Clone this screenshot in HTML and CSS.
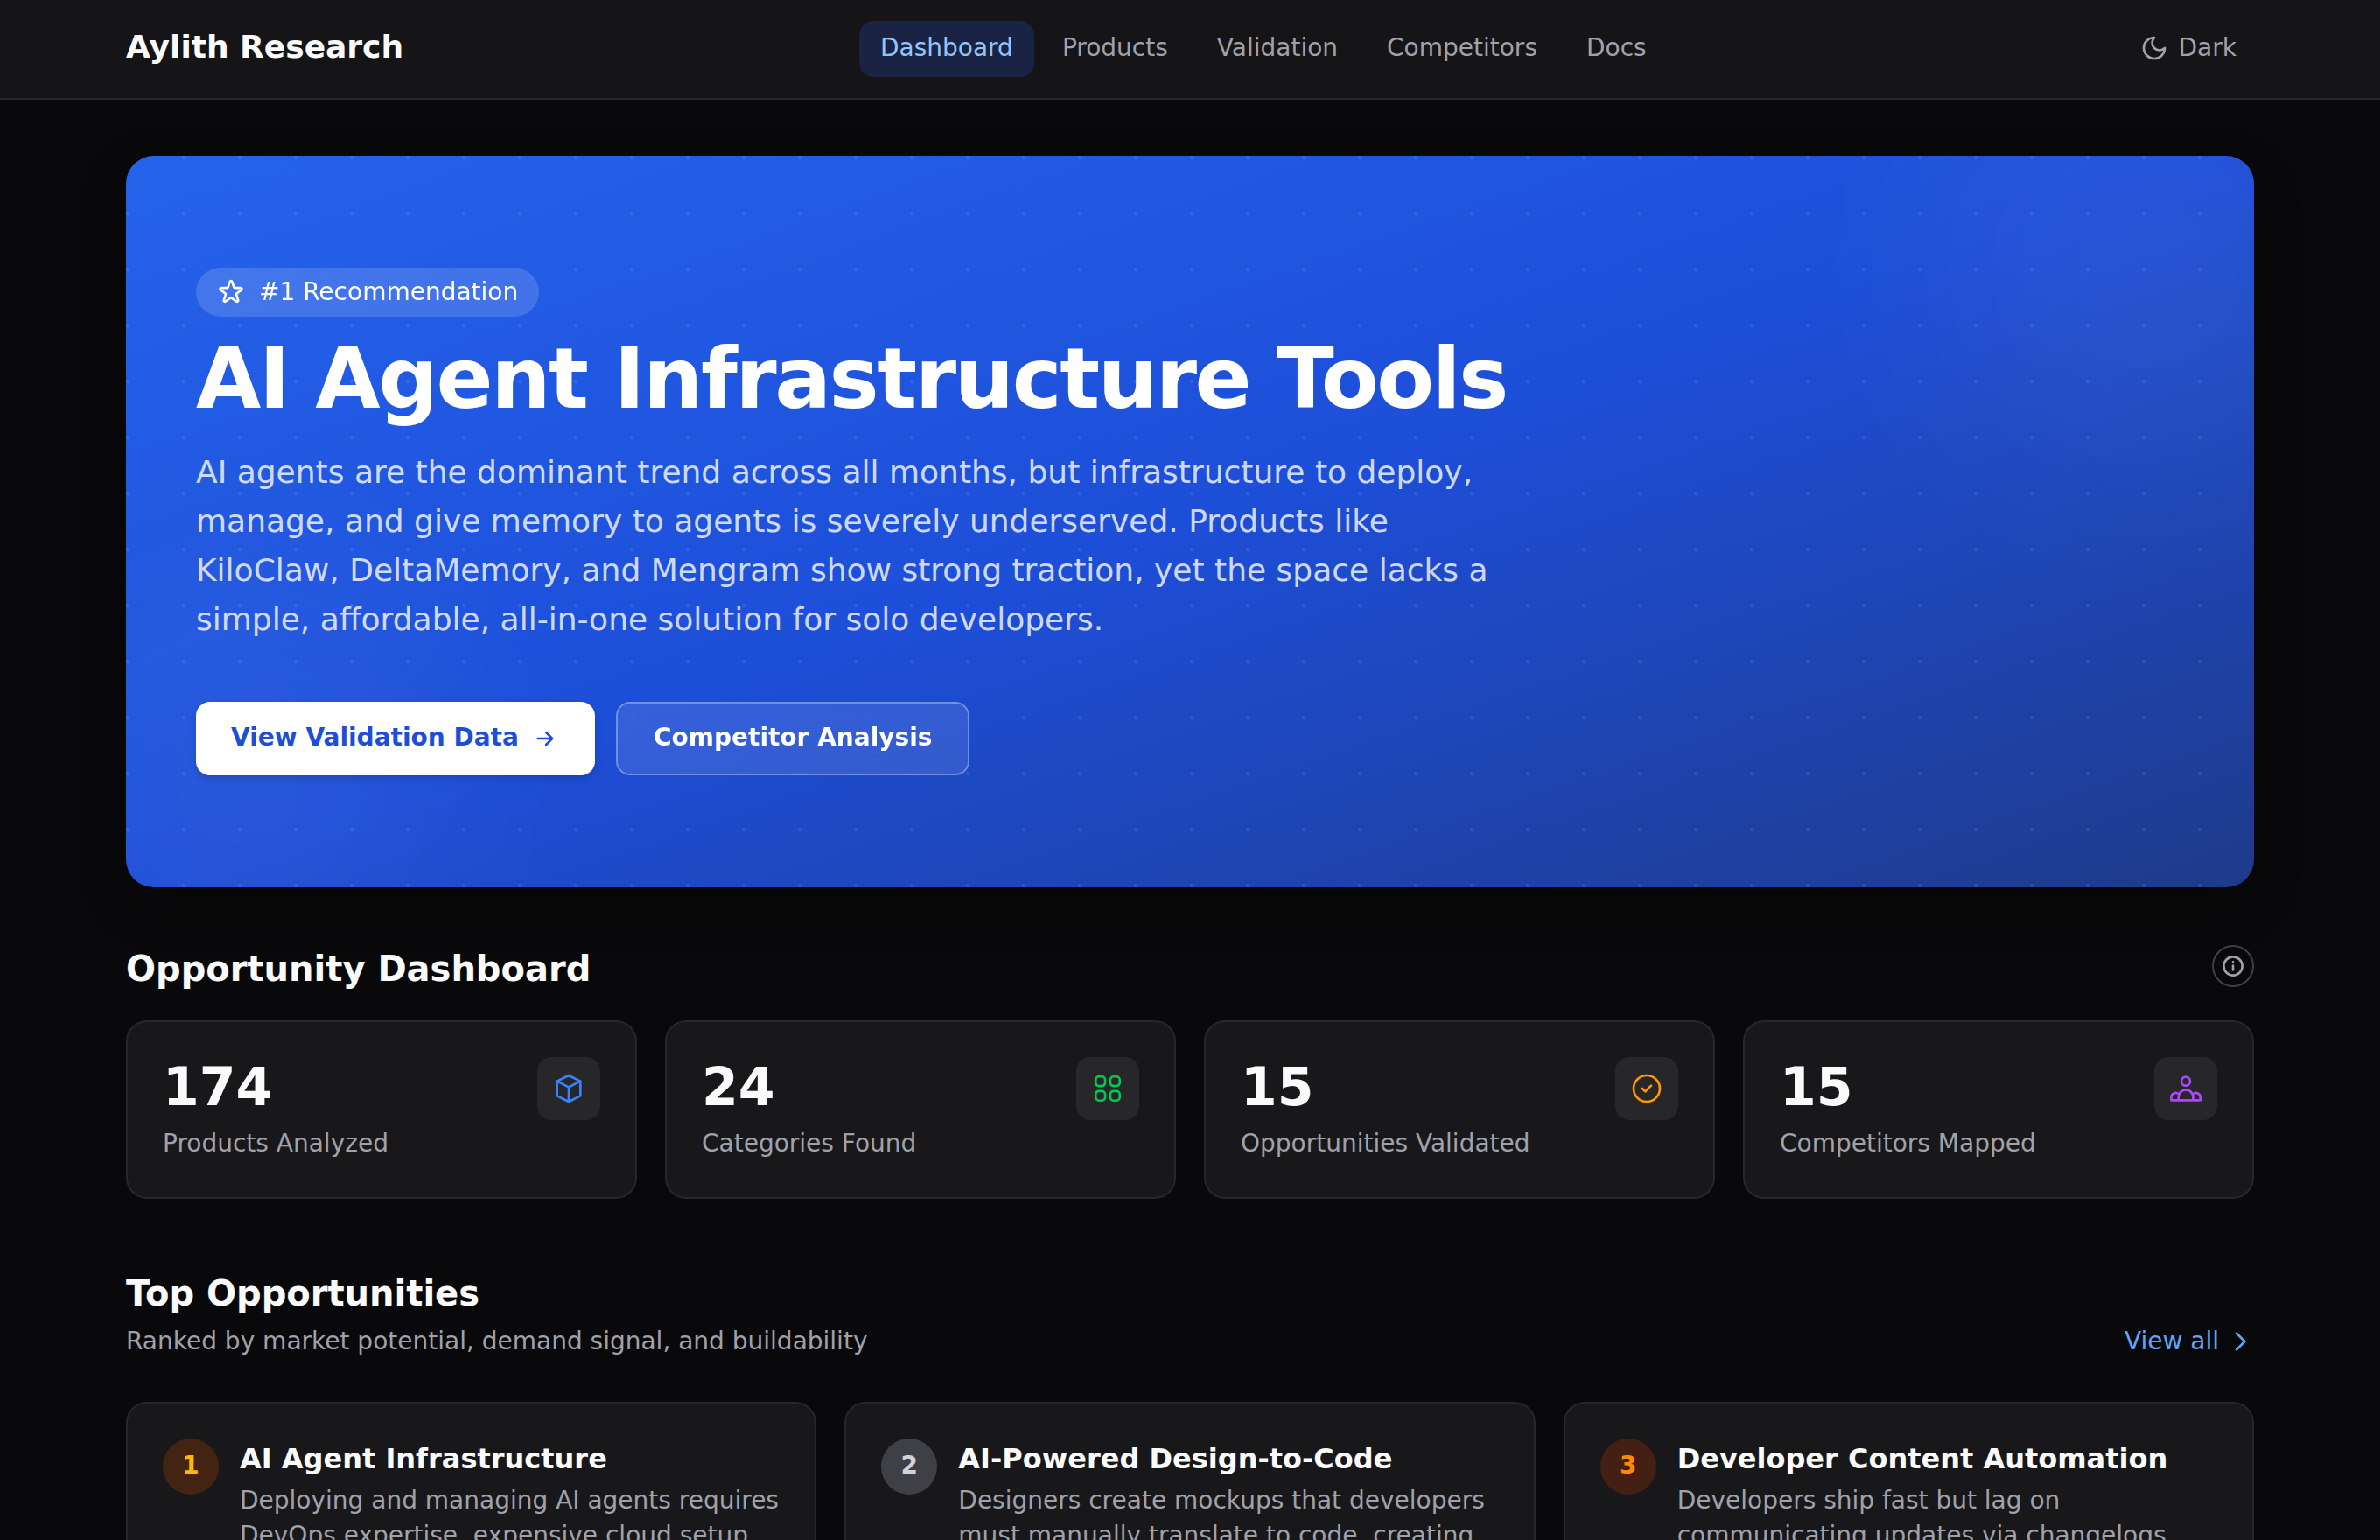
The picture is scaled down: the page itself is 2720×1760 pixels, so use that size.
FILE: index.html
```
<!DOCTYPE html>
<html lang="en">
<head>
  <meta charset="utf-8">
  <title>Aylith Research</title>
  <link rel="stylesheet" href="styles.css">
</head>
<body>

  <header class="header">
    <div class="container header-inner">
      <a class="brand">Aylith Research</a>
      <nav class="nav">
        <a class="nav-link active">Dashboard</a>
        <a class="nav-link">Products</a>
        <a class="nav-link">Validation</a>
        <a class="nav-link">Competitors</a>
        <a class="nav-link">Docs</a>
      </nav>
      <button class="theme-toggle">
        <svg class="icon-moon" viewBox="0 0 24 24"><path d="M12 3a6 6 0 0 0 9 9 9 9 0 1 1-9-9Z"/></svg>
        Dark
      </button>
    </div>
  </header>

  <main class="container main">

    <section class="hero">
      <div class="hero-dots"></div>
      <div class="hero-content">
        <span class="hero-badge">
          <svg class="icon-star" viewBox="0 0 24 24"><path d="M11.05 2.93c.3-.92 1.6-.92 1.9 0l1.52 4.67a1 1 0 0 0 .95.69h4.91c.97 0 1.37 1.24.59 1.81l-3.98 2.89a1 1 0 0 0-.36 1.12l1.52 4.67c.3.92-.76 1.69-1.54 1.12l-3.98-2.89a1 1 0 0 0-1.17 0l-3.98 2.89c-.78.57-1.84-.2-1.54-1.12l1.52-4.67a1 1 0 0 0-.36-1.12L3.08 10.1c-.78-.57-.38-1.81.59-1.81h4.91a1 1 0 0 0 .95-.69l1.52-4.67z"/></svg>
          #1 Recommendation
        </span>
        <h1>AI Agent Infrastructure Tools</h1>
        <p class="hero-text">AI agents are the dominant trend across all months, but infrastructure to deploy, manage, and give memory to agents is severely underserved. Products like KiloClaw, DeltaMemory, and Mengram show strong traction, yet the space lacks a simple, affordable, all-in-one solution for solo developers.</p>
        <div class="hero-actions">
          <a class="btn btn-primary">View Validation Data
            <svg class="icon-arrow" viewBox="0 0 24 24"><path d="M5 12h14M13 6l6 6-6 6"/></svg>
          </a>
          <a class="btn btn-ghost">Competitor Analysis</a>
        </div>
      </div>
    </section>

    <section class="dashboard">
      <div class="section-head">
        <h2>Opportunity Dashboard</h2>
        <button class="info-btn">
          <svg viewBox="0 0 24 24"><circle cx="12" cy="12" r="10.6"/><path d="M12 11.6v4.8M12 7.2v.1"/></svg>
        </button>
      </div>
      <div class="stats">
        <div class="stat-card">
          <div>
            <div class="stat-value">174</div>
            <div class="stat-label">Products Analyzed</div>
          </div>
          <div class="stat-icon blue">
            <svg viewBox="0 0 24 24"><path d="M20 7l-8-4-8 4m16 0l-8 4m8-4v10l-8 4m0-10L4 7m8 4v10M4 7v10l8 4"/></svg>
          </div>
        </div>
        <div class="stat-card">
          <div>
            <div class="stat-value">24</div>
            <div class="stat-label">Categories Found</div>
          </div>
          <div class="stat-icon green">
            <svg viewBox="0 0 24 24"><rect x="3.75" y="3.75" width="6.5" height="6.5" rx="2.25"/><rect x="13.75" y="3.75" width="6.5" height="6.5" rx="2.25"/><rect x="3.75" y="13.75" width="6.5" height="6.5" rx="2.25"/><rect x="13.75" y="13.75" width="6.5" height="6.5" rx="2.25"/></svg>
          </div>
        </div>
        <div class="stat-card">
          <div>
            <div class="stat-value">15</div>
            <div class="stat-label">Opportunities Validated</div>
          </div>
          <div class="stat-icon amber">
            <svg viewBox="0 0 24 24"><path d="M9 12l2 2 4-4m6 2a9 9 0 1 1-18 0 9 9 0 0 1 18 0z"/></svg>
          </div>
        </div>
        <div class="stat-card">
          <div>
            <div class="stat-value">15</div>
            <div class="stat-label">Competitors Mapped</div>
          </div>
          <div class="stat-icon purple">
            <svg viewBox="0 0 24 24"><path d="M17 20h5v-2a3 3 0 0 0-5.356-1.857M17 20H7m10 0v-2c0-.656-.126-1.283-.356-1.857M7 20H2v-2a3 3 0 0 1 5.356-1.857M7 20v-2c0-.656.126-1.283.356-1.857m0 0a5.002 5.002 0 0 1 9.288 0M15 7a3 3 0 1 1-6 0 3 3 0 0 1 6 0z"/></svg>
          </div>
        </div>
      </div>
    </section>

    <section class="opportunities">
      <div class="section-head opp-head">
        <div>
          <h2>Top Opportunities</h2>
          <p class="section-sub">Ranked by market potential, demand signal, and buildability</p>
        </div>
        <a class="view-all">View all
          <svg viewBox="0 0 24 24"><path d="M9 5l7 7-7 7"/></svg>
        </a>
      </div>
      <div class="opp-grid">
        <article class="opp-card">
          <span class="rank gold">1</span>
          <div>
            <h3>AI Agent Infrastructure</h3>
            <p>Deploying and managing AI agents requires DevOps expertise, expensive cloud setup,</p>
          </div>
        </article>
        <article class="opp-card">
          <span class="rank silver">2</span>
          <div>
            <h3>AI-Powered Design-to-Code</h3>
            <p>Designers create mockups that developers must manually translate to code, creating</p>
          </div>
        </article>
        <article class="opp-card">
          <span class="rank bronze">3</span>
          <div>
            <h3>Developer Content Automation</h3>
            <p>Developers ship fast but lag on communicating updates via changelogs,</p>
          </div>
        </article>
      </div>
    </section>

  </main>

</body>
</html>
```
FILE: styles.css
```
* { box-sizing: border-box; margin: 0; padding: 0; }

html, body { height: 1760px; overflow: hidden; }
body {
  font-family: "DejaVu Sans", sans-serif;
  font-size: 28px;
  line-height: 40px;
  background: #09090b;
  color: #fafafa;
}
button { font: inherit; color: inherit; background: none; border: none; }
svg { display: block; flex-shrink: 0; fill: none; stroke: currentColor; stroke-linecap: round; stroke-linejoin: round; }

.container { width: 2560px; margin: 0 auto; padding: 0 64px; }

/* Header */
.header { height: 114px; background: #151518; border-bottom: 2px solid #27272a; }
.header-inner {
  height: 112px;
  display: flex;
  align-items: center;
  justify-content: space-between;
}
.brand { padding-bottom: 4px; font-size: 36px; line-height: 56px; font-weight: bold; }
.nav { display: flex; gap: 8px; padding-left: 1px; }
.nav-link { padding: 11px 24px 13px; border-radius: 16px; color: #a1a1aa; }
.nav-link.active { background: #1a2344; color: #93c5fd; }
.theme-toggle { display: flex; align-items: center; gap: 12px; padding: 0 20px 2px; color: #a1a1aa; }
.icon-moon { width: 32px; height: 32px; stroke-width: 2; }

/* Hero */
.main { padding-top: 64px; }
.hero {
  position: relative;
  height: 836px;
  padding: 128px 80px;
  border-radius: 32px;
  overflow: hidden;
  background: linear-gradient(to bottom right, #2563eb, #1d4ed8 50%, #1e3a8a);
  box-shadow: 0 20px 50px rgba(0, 0, 0, 0.3);
}
.hero::before, .hero::after {
  content: "";
  position: absolute;
  width: 448px;
  height: 448px;
  border-radius: 50%;
  background: rgba(255, 255, 255, 0.055);
  filter: blur(128px);
}
.hero::before { top: -96px; right: -96px; }
.hero::after { bottom: -96px; left: -96px; }
.hero-dots {
  position: absolute;
  inset: 0;
  background: radial-gradient(circle at 2px 2px, #fff 2px, transparent 0);
  background-size: 64px 64px;
  opacity: 0.1;
}
.hero-content { position: relative; z-index: 1; }
.hero-badge {
  display: flex;
  align-items: center;
  gap: 16px;
  width: 392px;
  height: 56px;
  padding: 0 24px;
  border-radius: 28px;
  background: rgba(255, 255, 255, 0.15);
  backdrop-filter: blur(16px);
  color: #fff;
  white-space: nowrap;
}
.icon-star { width: 32px; height: 32px; stroke-width: 2; }
.hero h1 { margin-top: 18px; font-size: 96px; line-height: 106px; letter-spacing: -2.4px; color: #fff; white-space: nowrap; }
.hero-text { width: 1536px; margin-top: 26px; font-size: 36px; line-height: 56px; color: rgba(255, 255, 255, 0.8); }
.hero-actions { display: flex; gap: 24px; margin-top: 66px; }
.btn {
  display: flex;
  align-items: center;
  gap: 16px;
  height: 84px;
  padding-bottom: 2px;
  border-radius: 16px;
  font-weight: bold;
}
.btn-primary { width: 456px; padding-left: 40px; background: #fff; color: #1d4ed8; box-shadow: 0 4px 8px rgba(0, 0, 0, 0.15); }
.btn-ghost {
  width: 404px;
  padding-left: 41px;
  color: #fff;
  background: rgba(255, 255, 255, 0.1);
  border: 2px solid rgba(255, 255, 255, 0.3);
  backdrop-filter: blur(16px);
}
.icon-arrow { width: 28px; height: 28px; margin-top: 2px; stroke-width: 2.2; }

/* Section headings */
.section-head { display: flex; align-items: center; justify-content: space-between; }
h2 { padding-top: 6px; font-size: 40px; line-height: 50px; font-weight: bold; }
.info-btn {
  display: flex;
  align-items: center;
  justify-content: center;
  width: 48px;
  height: 48px;
  border: 2px solid #3f3f46;
  border-radius: 50%;
  color: #a1a1aa;
}
.info-btn svg { width: 24px; height: 24px; stroke-width: 2.6; overflow: visible; }

/* Stats */
.dashboard { padding-top: 62px; }
.stats { display: grid; grid-template-columns: repeat(4, 1fr); gap: 32px; margin-top: 34px; }
.stat-card {
  display: flex;
  justify-content: space-between;
  height: 204px;
  padding: 40px;
  background: #18181b;
  border: 2px solid #27272a;
  border-radius: 24px;
}
.stat-value { font-size: 60px; line-height: 68px; font-weight: bold; }
.stat-label { margin-top: 11px; color: #a1a1aa; }
.stat-icon {
  display: flex;
  align-items: center;
  justify-content: center;
  width: 72px;
  height: 72px;
  border-radius: 16px;
  background: #27272a;
}
.stat-icon svg { width: 40px; height: 40px; stroke-width: 1.6; }
.blue { color: #3b82f6; }
.green { color: #00c950; }
.amber { color: #fe9a00; }
.purple { color: #ad46ff; }

/* Opportunities */
.opportunities { padding-top: 77px; }
.opp-head { align-items: flex-end; }
.section-sub { margin-top: 10px; color: #a1a1aa; }
.view-all { display: flex; align-items: center; gap: 8px; color: #60a5fa; }
.view-all svg { width: 32px; height: 32px; stroke-width: 2; }
.opp-grid { display: grid; grid-template-columns: repeat(3, 1fr); gap: 32px; margin-top: 49px; }
.opp-card {
  display: flex;
  gap: 24px;
  height: 480px;
  padding: 40px;
  background: #18181b;
  border: 2px solid #27272a;
  border-radius: 24px;
}
.rank {
  display: flex;
  align-items: center;
  justify-content: center;
  flex-shrink: 0;
  width: 64px;
  height: 64px;
  padding-bottom: 2px;
  border-radius: 50%;
  font-weight: bold;
}
.gold { background: #432312; color: #ffb900; }
.silver { background: #3f3f46; color: #d4d4d8; }
.bronze { background: #431f14; color: #ff8904; }
.opp-card h3 { font-size: 32px; line-height: 46px; font-weight: bold; white-space: nowrap; }
.opp-card p { margin-top: 5px; color: #a1a1aa; }
```
